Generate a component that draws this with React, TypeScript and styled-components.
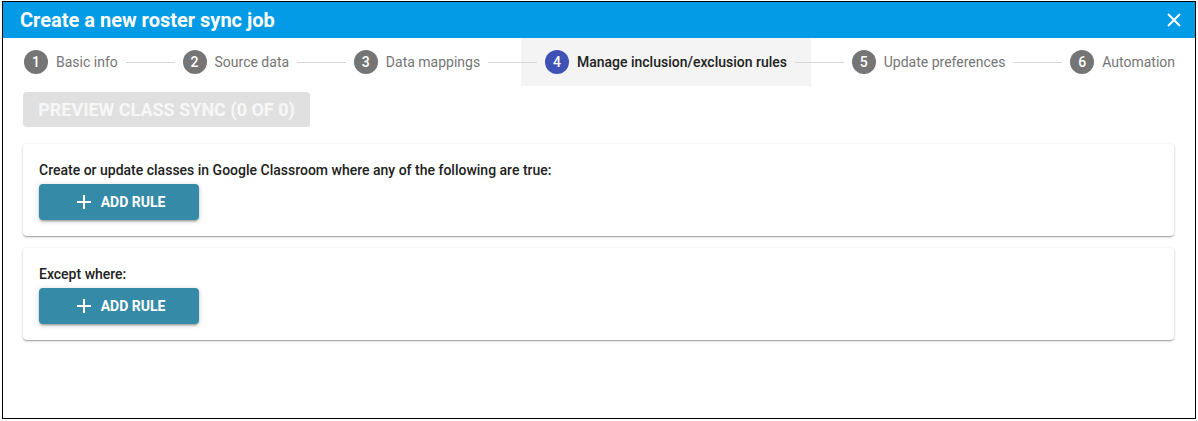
import React from "react";
import styled, { createGlobalStyle, css } from "styled-components";

const Global = createGlobalStyle`
  html, body { margin: 0; padding: 0; background: #fff; }
  body { font-family: Roboto, "Noto Sans", Arial, sans-serif; }
  * { box-sizing: border-box; }
`;

const Frame = styled.div`
  margin: 1px 2px 0 2px;
  width: 1194px;
  height: 418px;
  border: 1px solid #000;
  background: #fff;
  display: flex;
  flex-direction: column;
`;

const Header = styled.div`
  height: 36px;
  background: #039be5;
  display: flex;
  align-items: center;
  justify-content: space-between;
  padding: 0 9px 0 17px;
`;

const Title = styled.h1`
  margin: 0;
  color: #fff;
  font-size: 20px;
  font-weight: 700;
  letter-spacing: 0;
`;

const CloseButton = styled.button`
  width: 24px;
  height: 24px;
  border: 0;
  background: transparent;
  padding: 0;
  display: flex;
  align-items: center;
  justify-content: center;
  cursor: pointer;
`;

const Stepper = styled.div`
  height: 48px;
  display: flex;
  align-items: center;
  padding: 0 20px 0 21px;
`;

const Step = styled.div<{ $active?: boolean }>`
  height: 48px;
  display: flex;
  align-items: center;
  flex: none;
  ${(p) =>
    p.$active &&
    css`
      background: #f4f4f4;
      padding: 0 24px;
      margin: 0 -24px;
    `}
`;

const StepIcon = styled.span<{ $active?: boolean }>`
  width: 24px;
  height: 24px;
  border-radius: 50%;
  background: ${(p) => (p.$active ? "#3f51b5" : "#757575")};
  color: #fff;
  font-size: 14px;
  font-weight: 500;
  display: flex;
  align-items: center;
  justify-content: center;
`;

const StepLabel = styled.span<{ $active?: boolean }>`
  margin-left: 8px;
  font-size: 14px;
  color: ${(p) => (p.$active ? "#212121" : "#757575")};
  font-weight: ${(p) => (p.$active ? 500 : 400)};
  white-space: nowrap;
`;

const Connector = styled.span`
  position: relative;
  flex: 1 1 auto;
  height: 1px;
  background: #d6d6d6;
  margin: 0 8px;
`;

const Content = styled.div`
  padding: 6px 20px 0 20px;
  display: flex;
  flex-direction: column;
`;

const PreviewButton = styled.button`
  align-self: flex-start;
  width: 287px;
  height: 35px;
  border: 0;
  border-radius: 4px;
  background: #e0e0e0;
  color: #f7f7f7;
  font-family: Roboto, Arial, sans-serif;
  font-size: 18px;
  font-weight: 700;
  text-transform: uppercase;
  padding: 0;
  margin-bottom: 17px;
`;

const Card = styled.section`
  background: #fff;
  border-radius: 4px;
  box-shadow: 0 1px 3px rgba(0, 0, 0, 0.2), 0 1px 1px rgba(0, 0, 0, 0.14),
    0 2px 1px -1px rgba(0, 0, 0, 0.12);
  padding: 16px;
  margin-bottom: 12px;
  width: 1151px;
`;

const CardText = styled.p`
  margin: 0 0 4px 0;
  font-size: 14px;
  line-height: 20px;
  font-weight: 500;
  color: #212121;
`;

const AddButton = styled.button`
  width: 160px;
  height: 36px;
  border: 0;
  border-radius: 4px;
  background: #358aa8;
  color: #fff;
  font-family: Roboto, Arial, sans-serif;
  font-size: 14px;
  font-weight: 700;
  text-transform: uppercase;
  display: flex;
  align-items: center;
  justify-content: center;
  gap: 10px;
  padding: 0 0 0 4px;
  box-shadow: 0 1px 5px rgba(0, 0, 0, 0.2), 0 2px 2px rgba(0, 0, 0, 0.14),
    0 3px 1px -2px rgba(0, 0, 0, 0.12);
`;

const steps = [
  "Basic info",
  "Source data",
  "Data mappings",
  "Manage inclusion/exclusion rules",
  "Update preferences",
  "Automation",
];
const activeIndex = 3;

const Plus = () => (
  <svg width="14" height="14" viewBox="0 0 14 14">
    <path d="M7 0v14M0 7h14" stroke="#fff" strokeWidth="2" />
  </svg>
);

export default function App() {
  return (
    <>
      <Global />
      <Frame>
        <Header>
          <Title>Create a new roster sync job</Title>
          <CloseButton aria-label="close">
            <svg width="14" height="14" viewBox="0 0 14 14">
              <path d="M1 1L13 13M13 1L1 13" stroke="#fff" strokeWidth="2" />
            </svg>
          </CloseButton>
        </Header>
        <Stepper>
          {steps.map((s, i) => (
            <React.Fragment key={s}>
              {i > 0 && <Connector />}
              <Step $active={i === activeIndex}>
                <StepIcon $active={i === activeIndex}>{i + 1}</StepIcon>
                <StepLabel $active={i === activeIndex}>{s}</StepLabel>
              </Step>
            </React.Fragment>
          ))}
        </Stepper>
        <Content>
          <PreviewButton disabled>Preview class sync (0 of 0)</PreviewButton>
          <Card>
            <CardText>
              Create or update classes in Google Classroom where any of the following are true:
            </CardText>
            <AddButton>
              <Plus />
              Add rule
            </AddButton>
          </Card>
          <Card>
            <CardText>Except where:</CardText>
            <AddButton>
              <Plus />
              Add rule
            </AddButton>
          </Card>
        </Content>
      </Frame>
    </>
  );
}
